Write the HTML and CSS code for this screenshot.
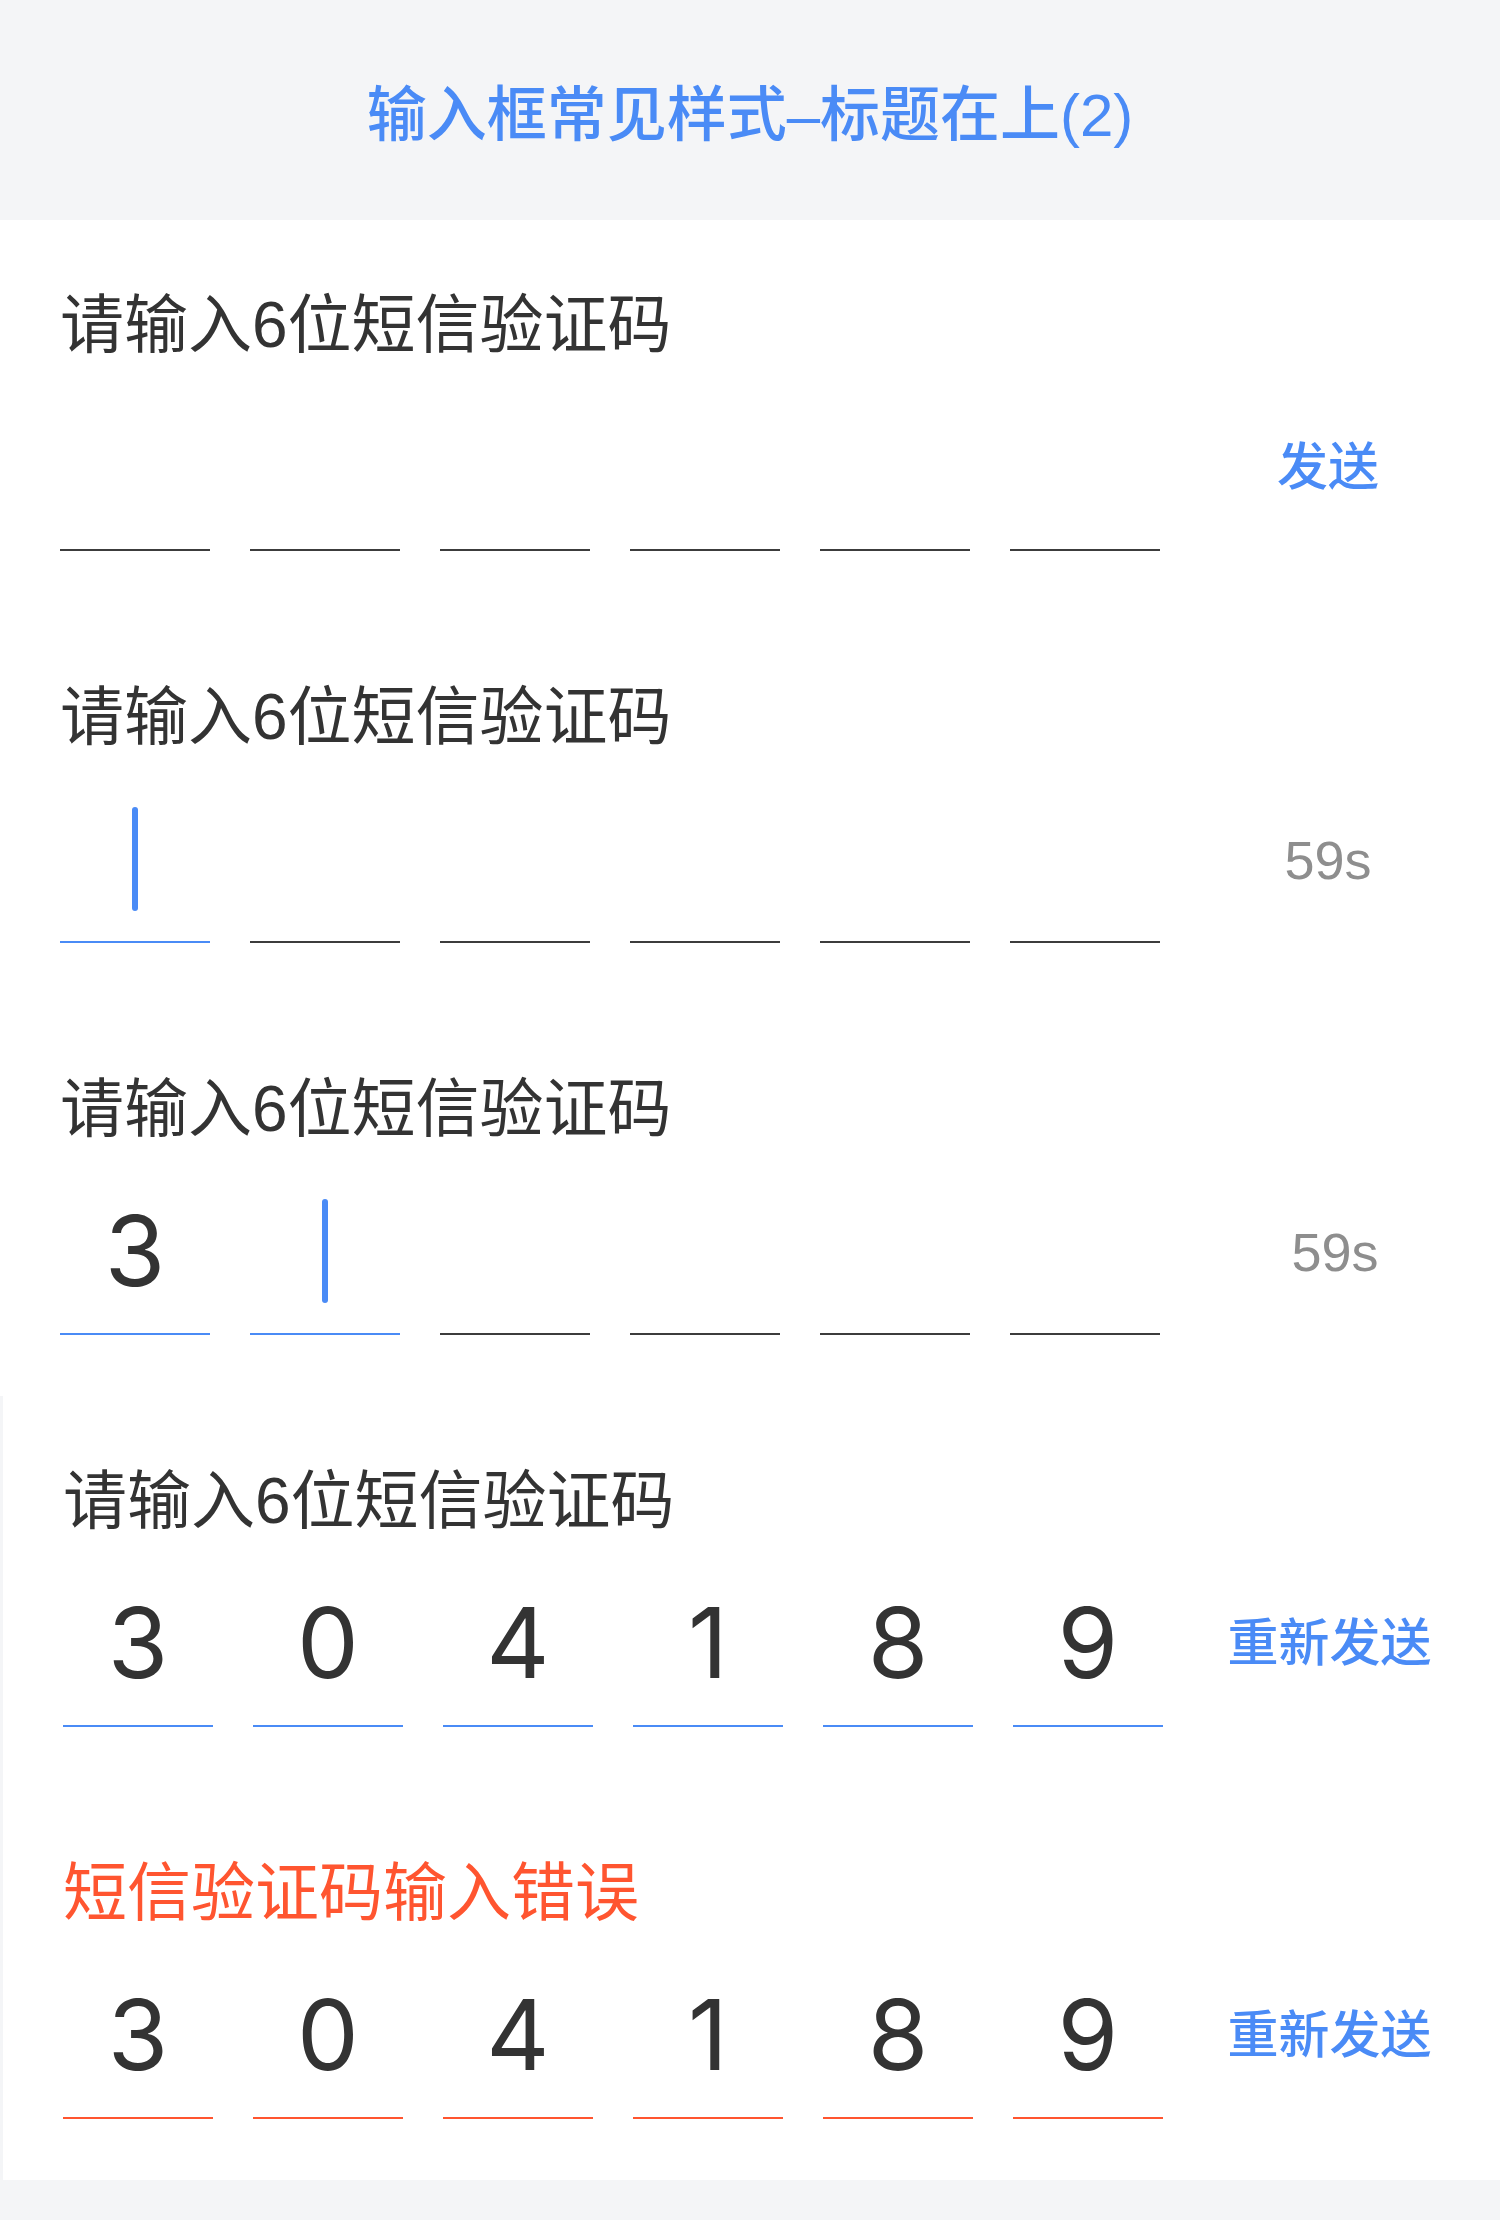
FILE: index.html
```html
<!DOCTYPE html>
<html lang="zh-CN">
<head>
<meta charset="utf-8">
<title>输入框常见样式-标题在上(2)</title>
<link rel="stylesheet" href="styles.css">
</head>
<body>
<header class="header">
  <h1 class="title">输入框常见样式–标题在上(2)</h1>
</header>
<main class="page">
  <section class="field">
    <div class="label">请输入6位短信验证码</div>
    <div class="row">
      <div class="cells">
        <div class="cell"></div>
        <div class="cell"></div>
        <div class="cell"></div>
        <div class="cell"></div>
        <div class="cell"></div>
        <div class="cell"></div>
      </div>
      <div class="action action--link">发送</div>
    </div>
  </section>

  <section class="field">
    <div class="label">请输入6位短信验证码</div>
    <div class="row">
      <div class="cells">
        <div class="cell cell--active"><span class="cursor"></span></div>
        <div class="cell"></div>
        <div class="cell"></div>
        <div class="cell"></div>
        <div class="cell"></div>
        <div class="cell"></div>
      </div>
      <div class="action action--count">59s</div>
    </div>
  </section>

  <section class="field">
    <div class="label">请输入6位短信验证码</div>
    <div class="row">
      <div class="cells">
        <div class="cell cell--active"><span class="digit">3</span></div>
        <div class="cell cell--active"><span class="cursor"></span></div>
        <div class="cell"></div>
        <div class="cell"></div>
        <div class="cell"></div>
        <div class="cell"></div>
      </div>
      <div class="action action--count action--shift">59s</div>
    </div>
  </section>

  <div class="group">
    <section class="field">
      <div class="label">请输入6位短信验证码</div>
      <div class="row">
        <div class="cells">
          <div class="cell cell--active"><span class="digit">3</span></div>
          <div class="cell cell--active"><span class="digit">0</span></div>
          <div class="cell cell--active"><span class="digit">4</span></div>
          <div class="cell cell--active"><span class="digit">1</span></div>
          <div class="cell cell--active"><span class="digit">8</span></div>
          <div class="cell cell--active"><span class="digit">9</span></div>
        </div>
        <div class="action action--link">重新发送</div>
      </div>
    </section>

    <section class="field">
      <div class="label label--error">短信验证码输入错误</div>
      <div class="row">
        <div class="cells">
          <div class="cell cell--error"><span class="digit">3</span></div>
          <div class="cell cell--error"><span class="digit">0</span></div>
          <div class="cell cell--error"><span class="digit">4</span></div>
          <div class="cell cell--error"><span class="digit">1</span></div>
          <div class="cell cell--error"><span class="digit">8</span></div>
          <div class="cell cell--error"><span class="digit">9</span></div>
        </div>
        <div class="action action--link">重新发送</div>
      </div>
    </section>
  </div>
</main>
</body>
</html>
```

FILE: styles.css
```css
* {
  box-sizing: border-box;
}

html, body {
  margin: 0;
  padding: 0;
}

body {
  background: #f4f5f7;
  font-family: "Liberation Sans", "Noto Sans CJK SC", sans-serif;
  color: #333333;
}

.header {
  height: 220px;
  padding-top: 12px;
  display: flex;
  align-items: center;
  justify-content: center;
  background: #f4f5f7;
}

.title {
  margin: 0;
  font-size: 60px;
  line-height: 60px;
  font-weight: 500;
  color: #4a8bf6;
}

.page {
  background: #f4f5f7;
  padding-bottom: 40px;
}

.field {
  height: 392px;
  padding: 73px 4px 0 60px;
  background: #ffffff;
}

.group {
  margin-left: 3px;
}

.label {
  font-size: 64px;
  line-height: 64px;
  height: 64px;
  color: #333333;
  white-space: nowrap;
}

.label--error {
  color: #ff5530;
}

.row {
  display: flex;
  align-items: center;
  margin-top: 28px;
}

.cells {
  display: flex;
  gap: 40px;
}

.cell {
  width: 150px;
  height: 166px;
  border-bottom: 2px solid #3c3c3c;
  display: flex;
  align-items: center;
  justify-content: center;
}

.cell--active {
  border-bottom-color: #4a8bf6;
}

.cell--error {
  border-bottom-color: #ff5530;
}

.cursor {
  display: block;
  width: 6px;
  height: 104px;
  border-radius: 3px;
  background: #4a8bf6;
}

.digit {
  font-family: "Inter", "Liberation Sans", sans-serif;
  font-size: 98px;
  line-height: 98px;
  color: #333333;
}

.action {
  flex: 1;
  text-align: center;
  white-space: nowrap;
}

.action--link {
  font-size: 51px;
  line-height: 60px;
  font-weight: 500;
  color: #4a8bf6;
}

.action--count {
  font-size: 54px;
  line-height: 60px;
  color: #8e8e8e;
}

.action--shift {
  padding-left: 14px;
}
```
